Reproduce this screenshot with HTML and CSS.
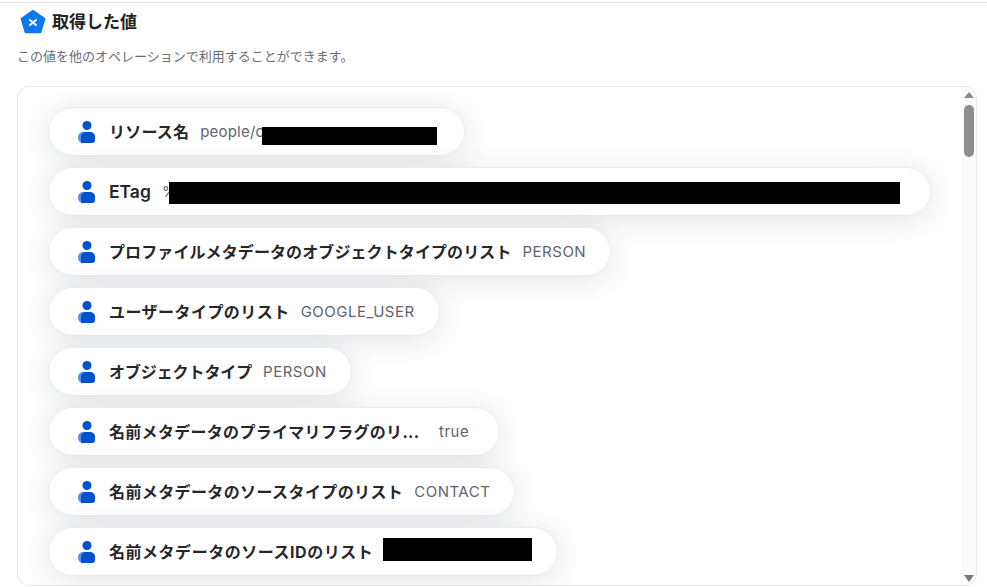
FILE: index.html
```html
<!DOCTYPE html>
<html lang="ja">
<head>
<meta charset="utf-8">
<title>取得した値</title>
<link rel="stylesheet" href="styles.css">
</head>
<body>
<main class="page">
  <header class="head">
    <svg class="logo" viewBox="0 0 26 26" aria-hidden="true">
      <path d="M13 1.800 24.400 9.700 20.400 23.200H5.600L1.600 9.700Z" fill="#0a78f0" stroke="#0a78f0" stroke-width="2" stroke-linejoin="round"/>
      <path d="M10 11 16 16M16 11 10 16" stroke="#fff" stroke-width="2" stroke-linecap="round" fill="none"/>
    </svg>
    <h1 class="title">取得した値</h1>
  </header>
  <p class="desc">この値を他のオペレーションで利用することができます。</p>
  <section class="panel">
    <ul class="list">
      <li class="pill p1">
        <svg class="person" viewBox="0 0 17 22" aria-hidden="true"><circle cx="9" cy="4.500" r="4.500"/><rect class="pf" x="0" y="11" width="17" height="11" rx="5"/><path d="M3 22v-6c0-3 2-5 5.500-5h3c3 0 5.500 2 5.500 5v3c0 2-1 3-3 3Z"/></svg>
        <span class="name">リソース名</span><span class="val">people/c</span><span class="red r1"></span>
      </li>
      <li class="pill p2">
        <svg class="person" viewBox="0 0 17 22" aria-hidden="true"><circle cx="9" cy="4.500" r="4.500"/><rect class="pf" x="0" y="11" width="17" height="11" rx="5"/><path d="M3 22v-6c0-3 2-5 5.500-5h3c3 0 5.500 2 5.500 5v3c0 2-1 3-3 3Z"/></svg>
        <span class="name">ETag</span><span class="val">%</span><span class="red r2"></span>
      </li>
      <li class="pill p3">
        <svg class="person" viewBox="0 0 17 22" aria-hidden="true"><circle cx="9" cy="4.500" r="4.500"/><rect class="pf" x="0" y="11" width="17" height="11" rx="5"/><path d="M3 22v-6c0-3 2-5 5.500-5h3c3 0 5.500 2 5.500 5v3c0 2-1 3-3 3Z"/></svg>
        <span class="name">プロファイルメタデータのオブジェクトタイプのリスト</span><span class="val">PERSON</span>
      </li>
      <li class="pill p4">
        <svg class="person" viewBox="0 0 17 22" aria-hidden="true"><circle cx="9" cy="4.500" r="4.500"/><rect class="pf" x="0" y="11" width="17" height="11" rx="5"/><path d="M3 22v-6c0-3 2-5 5.500-5h3c3 0 5.500 2 5.500 5v3c0 2-1 3-3 3Z"/></svg>
        <span class="name">ユーザータイプのリスト</span><span class="val">GOOGLE_USER</span>
      </li>
      <li class="pill p5">
        <svg class="person" viewBox="0 0 17 22" aria-hidden="true"><circle cx="9" cy="4.500" r="4.500"/><rect class="pf" x="0" y="11" width="17" height="11" rx="5"/><path d="M3 22v-6c0-3 2-5 5.500-5h3c3 0 5.500 2 5.500 5v3c0 2-1 3-3 3Z"/></svg>
        <span class="name">オブジェクトタイプ</span><span class="val">PERSON</span>
      </li>
      <li class="pill p6">
        <svg class="person" viewBox="0 0 17 22" aria-hidden="true"><circle cx="9" cy="4.500" r="4.500"/><rect class="pf" x="0" y="11" width="17" height="11" rx="5"/><path d="M3 22v-6c0-3 2-5 5.500-5h3c3 0 5.500 2 5.500 5v3c0 2-1 3-3 3Z"/></svg>
        <span class="name">名前メタデータのプライマリフラグのリ...</span><span class="val">true</span>
      </li>
      <li class="pill p7">
        <svg class="person" viewBox="0 0 17 22" aria-hidden="true"><circle cx="9" cy="4.500" r="4.500"/><rect class="pf" x="0" y="11" width="17" height="11" rx="5"/><path d="M3 22v-6c0-3 2-5 5.500-5h3c3 0 5.500 2 5.500 5v3c0 2-1 3-3 3Z"/></svg>
        <span class="name">名前メタデータのソースタイプのリスト</span><span class="val">CONTACT</span>
      </li>
      <li class="pill p8">
        <svg class="person" viewBox="0 0 17 22" aria-hidden="true"><circle cx="9" cy="4.500" r="4.500"/><rect class="pf" x="0" y="11" width="17" height="11" rx="5"/><path d="M3 22v-6c0-3 2-5 5.500-5h3c3 0 5.500 2 5.500 5v3c0 2-1 3-3 3Z"/></svg>
        <span class="name">名前メタデータのソースIDのリスト</span><span class="val blank"></span><span class="red r3"></span>
      </li>
    </ul>
    <div class="scrollbar" aria-hidden="true">
      <span class="arrow up"></span>
      <span class="thumb"></span>
      <span class="arrow down"></span>
    </div>
  </section>
</main>
</body>
</html>
```
FILE: styles.css
```css
* { box-sizing: border-box; }
html, body { margin: 0; padding: 0; height: 100%; overflow: hidden; background: #fff; }
body {
  font-family: Inter, "Noto Sans CJK JP", sans-serif;
  color: #27272a;
}
.page {
  height: 585px;
  border-top: 1px solid #e2e2e4;
  margin-top: 2px;
  padding: 6px 10px 0 17px;
  display: flex;
  flex-direction: column;
}
.head {
  display: flex;
  align-items: center;
  gap: 6px;
  height: 26px;
  padding-left: 3px;
}
.logo { width: 26px; height: 26px; flex: none; }
.title {
  margin: 0;
  font-size: 17px;
  font-weight: 700;
  line-height: 26px;
  color: #222;
}
.desc {
  margin: 11px 0 0;
  font-size: 13px;
  line-height: 20px;
  color: #6b6e76;
}
.panel {
  position: relative;
  margin-top: 20px;
  height: 500px;
  flex: none;
  border: 1px solid #e5e6ea;
  border-radius: 12px;
  background: #fff;
  overflow: hidden;
}
.list {
  list-style: none;
  margin: 0;
  padding: 20px 0 0 30px;
  display: flex;
  flex-direction: column;
  align-items: flex-start;
  gap: 11px;
}
.pill {
  position: relative;
  display: flex;
  align-items: center;
  height: 49px;
  padding: 0 24px 0 29px;
  background: #fff;
  border: 1px solid #eaebef;
  border-radius: 25px;
  box-shadow: 0 4px 28px rgba(20, 24, 40, .12);
  white-space: nowrap;
}
.person { width: 17px; height: 22px; flex: none; fill: #0052cc; }
.person .pf { fill: #5c93ea; }
.name {
  margin-left: 14px;
  font-size: 16px;
  font-weight: 700;
  line-height: 24px;
  color: #27272a;
}
.val {
  margin-left: 11px;
  font-size: 15px;
  line-height: 20px;
  letter-spacing: .5px;
  color: #5f636e;
}
.blank { margin-left: 10px; width: 149px; height: 20px; }
.red { position: absolute; background: #000; }
.r1 { left: 213px; top: 19px; width: 175px; height: 18px; }
.r2 { left: 120px; top: 14px; width: 731px; height: 22px; }
.r3 { left: 334px; top: 10px; width: 149px; height: 23px; }
.p1 { width: 417px; }
.p1 .name { letter-spacing: .2px; }
.p1 .val { letter-spacing: .2px; }
.p2 { width: 883px; }
.p2 .name { font-size: 17.5px; font-weight: 600; }
.p3 .name { letter-spacing: .1px; }
.p4 .name { letter-spacing: .45px; }
.p5 .name { letter-spacing: -.1px; }
.p6 { width: 452px; }
.p6 .name { letter-spacing: .3px; width: 319px; }
.p7 .name { letter-spacing: .39px; }
.p8 { width: 510px; }
.p8 .name { letter-spacing: .53px; }
.scrollbar {
  position: absolute;
  top: 0;
  right: 0;
  bottom: 0;
  width: 15px;
  display: flex;
  flex-direction: column;
  align-items: center;
  background: #fcfcfc;
}
.arrow { width: 0; height: 0; border-left: 5px solid transparent; border-right: 5px solid transparent; }
.up { margin-top: 5px; border-bottom: 6px solid #8a8a8a; }
.down { margin-top: auto; margin-bottom: 3px; border-top: 7px solid #7a7a7a; }
.thumb { margin-top: 7px; width: 10px; height: 52px; border-radius: 5px; background: #8e8e8e; }
```
